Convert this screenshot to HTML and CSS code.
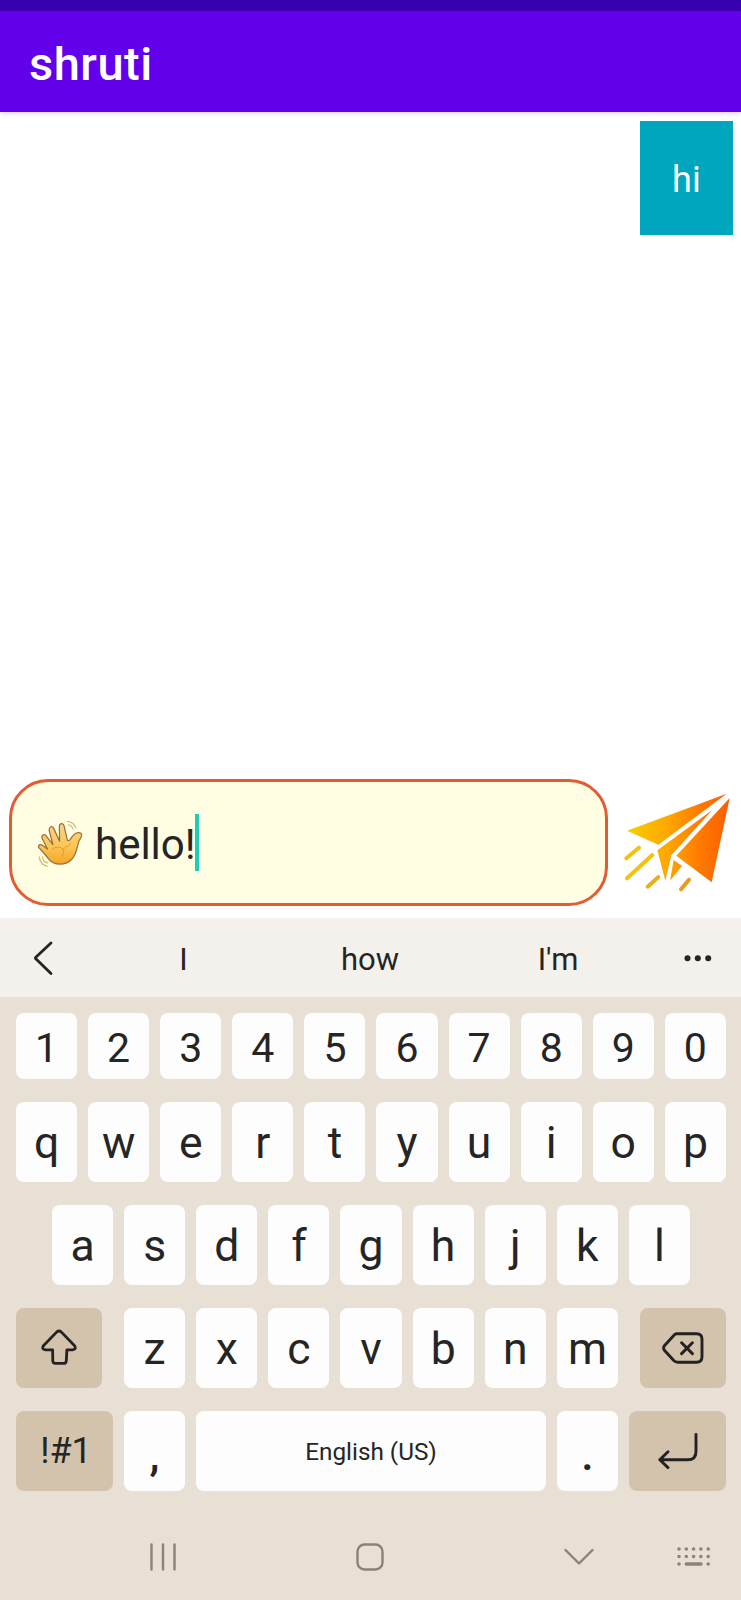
FILE: index.html
```html
<!DOCTYPE html>
<html lang="en">
<head>
<meta charset="utf-8">
<title>shruti</title>
<link rel="stylesheet" href="styles.css">
</head>
<body>
<div class="phone">
  <div class="status-bar"></div>
  <header class="app-bar">shruti</header>
  <main class="messages"><div class="bubble">hi</div></main>

  <div class="composer">
    <div class="field">
      <svg class="wave" viewBox="110 150 145 145" role="img" aria-label="Waving hand">
        <defs>
          <linearGradient id="skin" x1="0" y1="0" x2="0" y2="1">
            <stop offset="0" stop-color="#f8d488"/><stop offset=".55" stop-color="#fac758"/><stop offset="1" stop-color="#f2a526"/>
          </linearGradient>
        </defs>
        <path d="M147 268C138 255 126 243 118 234C115 227 123 223 129 228L144 239L128 207C125 198 134 193 140 200L160 226L149 184C148 174 157 169 162 177L180 216L179 173C179 162 190 160 193 170L203 213C207 216 211 212 214 206L221 198C228 188 246 188 245 198C245 205 239 210 236 218C231 239 228 257 216 269C198 288 163 289 147 268Z" fill="url(#skin)" stroke="#9b6c3c" stroke-width="3.6" stroke-linejoin="round"/>
        <path d="M157 239C170 230 184 233 190 239C193 247 189 254 188 261M191 239C201 228 208 230 214 222" fill="none" stroke="#dd932c" stroke-width="2.5" stroke-linecap="round"/>
        <path d="M203 157C215 158 224 166 228 177M205 167C212 168 217 173 220 180M120 262C121 276 130 287 144 290M129 262C130 271 136 278 144 280" fill="none" stroke="#d3b76f" stroke-width="3.4" stroke-linecap="round"/>
      </svg>
      <span class="draft">hello!</span><span class="caret"></span>
    </div>
    <svg class="send" viewBox="126 60 330 315" role="img" aria-label="Send">
      <defs>
        <linearGradient id="flame" gradientUnits="userSpaceOnUse" x1="140" y1="0" x2="450" y2="0">
          <stop offset="0" stop-color="#f5d000"/><stop offset=".38" stop-color="#ffa800"/><stop offset=".72" stop-color="#ff7900"/><stop offset="1" stop-color="#fa5d00"/>
        </linearGradient>
      </defs>
      <g fill="url(#flame)">
        <path d="M141 182L440 71L235 224Z"/>
        <path d="M232 241L397 120L274 256L256 332Z"/>
        <path d="M449 84L395 337L289 257Z"/>
        <path d="M281 270L306 288L270 332Z"/>
      </g>
      <g fill="none" stroke-width="12" stroke-linecap="round">
        <path stroke="#f2c20c" d="M139 265L177 233"/>
        <path stroke="#f2c20c" d="M141 325L217 255"/>
        <path stroke="#eab019" d="M203 350L235 321"/>
        <path stroke="#eb9a20" d="M303 358L327 329"/>
      </g>
    </svg>
  </div>

  <div class="suggestions">
    <svg width="20" height="36" viewBox="0 0 20 36"><path d="M18 3L2.8 17.2Q2 18 2.8 18.8L18 33.5" fill="none" stroke="#252525" stroke-width="2.8" stroke-linecap="round"/></svg>
    <span>I</span><span>how</span><span>I'm</span>
    <svg width="30" height="8" viewBox="0 0 30 8" fill="#252525"><circle cx="3.5" cy="4.3" r="3"/><circle cx="13.8" cy="4.3" r="3"/><circle cx="24.2" cy="4.3" r="3"/></svg>
  </div>

  <div class="keyboard">
    <div class="row digits">
      <div class="key">1</div><div class="key">2</div><div class="key">3</div><div class="key">4</div><div class="key">5</div><div class="key">6</div><div class="key">7</div><div class="key">8</div><div class="key">9</div><div class="key">0</div>
    </div>
    <div class="row">
      <div class="key">q</div><div class="key">w</div><div class="key">e</div><div class="key">r</div><div class="key">t</div><div class="key">y</div><div class="key">u</div><div class="key">i</div><div class="key">o</div><div class="key">p</div>
    </div>
    <div class="row home-row">
      <div class="key">a</div><div class="key">s</div><div class="key">d</div><div class="key">f</div><div class="key">g</div><div class="key">h</div><div class="key">j</div><div class="key">k</div><div class="key">l</div>
    </div>
    <div class="row">
      <div class="key accent shift">
        <svg width="36" height="38" viewBox="0 0 36 38"><path d="M15.6 3.1Q18 1 20.4 3.1L33.6 16.8Q35.6 20.4 31.5 20.8L25.9 20.8L25.3 31.8Q25.1 34.4 22.4 34.4L14.4 34.4Q11.9 34.4 11.8 31.8L11.6 20.8L4.5 20.8Q.4 20.4 2.4 16.8Z" fill="none" stroke="#222" stroke-width="2.8" stroke-linejoin="round"/></svg>
      </div>
      <div class="key">z</div><div class="key">x</div><div class="key">c</div><div class="key">v</div><div class="key">b</div><div class="key">n</div><div class="key">m</div>
      <div class="key accent delete">
        <svg width="42" height="32" viewBox="0 0 42 32"><path d="M14.5 1.8H34.5Q40 1.8 40 7.3V24.7Q40 30.2 34.5 30.2H15.5Q13.5 30.2 12 28.8L2.6 18.6Q.6 16 2.6 13.4L12 3.2Q13 1.8 15 1.8ZM19.6 10.8L30.4 21.6M30.4 10.8L19.6 21.6" fill="none" stroke="#222" stroke-width="2.9" stroke-linecap="round" stroke-linejoin="round"/></svg>
      </div>
    </div>
    <div class="row">
      <div class="key accent wide symbols">!#1</div>
      <div class="key mark comma">,</div>
      <div class="key space">English (US)</div>
      <div class="key mark">.</div>
      <div class="key accent wide">
        <svg width="40" height="36" viewBox="0 0 40 36"><path d="M38 1.5V18.5Q38 26.8 29.7 26.8H1.8M10 18.8L1.8 26.8L10 34.6" fill="none" stroke="#222" stroke-width="2.9" stroke-linecap="round" stroke-linejoin="round"/></svg>
      </div>
    </div>
  </div>

  <nav class="nav-bar">
    <svg width="28" height="28" viewBox="0 0 28 28"><path d="M2.5 1.5V26.5M14 1.5V26.5M25.5 1.5V26.5"/></svg>
    <svg width="28" height="28" viewBox="0 0 28 28"><rect x="1.5" y="1.5" width="25" height="25" rx="7"/></svg>
    <svg width="30" height="18" viewBox="0 0 30 18"><path d="M1.5 2L15 15.5L28.5 2"/></svg>
    <svg class="dots" width="34" height="20" viewBox="0 0 34 20"><path d="M2 2h.01M9.3 2h.01M16.6 2h.01M23.9 2h.01M31.2 2h.01M2 9.5h.01M9.3 9.5h.01M16.6 9.5h.01M23.9 9.5h.01M31.2 9.5h.01M2 17h.01M9.3 17H23.9M31.2 17h.01"/></svg>
  </nav>
</div>
</body>
</html>
```

FILE: styles.css
```css
* { box-sizing: border-box; }
body { margin: 0; background: #fff; font-family: Roboto, sans-serif; color: #252525; }
svg { display: block; flex: none; }
.phone { width: 741px; height: 1600px; display: flex; flex-direction: column; overflow: hidden; }

.status-bar { height: 11px; background: #3700b0; }
.app-bar {
  height: 101px; padding: 3px 0 0 29px; display: flex; align-items: center;
  background: #6200ec; color: #fff; font-size: 47px; font-weight: 500; letter-spacing: .5px;
  box-shadow: 0 1px 5px rgba(90, 30, 160, .25);
}
.messages { height: 667px; padding: 9px 8px; display: flex; justify-content: flex-end; align-items: flex-start; }
.bubble {
  width: 93px; height: 114px; padding-top: 4px; display: flex; align-items: center; justify-content: center;
  background: #00a6bd; color: #fff; font-size: 36px; letter-spacing: .3px;
}

.composer { height: 139px; padding-left: 9px; display: flex; align-items: flex-start; }
.field {
  width: 599px; height: 127px; padding-left: 24px; display: flex; align-items: center;
  background: #fffee2; border: 3px solid #e35c31; border-radius: 39px;
}
.wave { width: 49px; height: 49px; margin-top: 1px; }
.draft { margin-left: 10px; padding-top: 4px; font-size: 42px; }
.caret { width: 4px; height: 57px; margin-left: -1px; background: #20ccb4; }
.send { width: 110px; height: 105px; margin: 11px 0 0 14px; }

.suggestions {
  height: 79px; display: grid; grid-template-columns: 86px 195px 178px 198px 84px;
  align-items: center; justify-items: center; background: #f4f0eb; font-size: 31px;
}
.suggestions span { padding-top: 3px; }

.keyboard { height: 519px; padding: 16px 15px 0 16px; display: flex; flex-direction: column; gap: 23px; background: #e9e0d5; }
.row { height: 80px; display: flex; gap: 11px; }
.digits { height: 66px; }
.home-row { padding: 0 36px; }
.key {
  flex: 1 1 0; min-width: 0; padding-top: 1px; display: flex; align-items: center; justify-content: center;
  background: #fdfdfd; border-radius: 8px; font-size: 44.5px;
}
.digits .key { padding-top: 4px; font-size: 41px; }
.accent { background: #d4c3ac; }
.shift, .delete { flex: 0 0 86px; padding-top: 0; }
.shift { margin-right: 11px; }
.delete { margin-left: 11px; }
.wide { flex: 0 0 97px; padding-top: 0; }
.symbols { padding-left: 3px; font-size: 36px; }
.mark { flex: 0 0 61px; padding-top: 7px; font-weight: 500; }
.space { font-size: 24.3px; }

.nav-bar {
  height: 84px; padding: 0 0 2px 96px; display: grid; grid-template-columns: 134px 280px 137px 94px;
  align-items: center; justify-items: center; background: #e9e0d5;
}
.nav-bar svg { fill: none; stroke: #8b827a; stroke-width: 2.4; stroke-linecap: round; stroke-linejoin: round; }
.nav-bar .dots { stroke-width: 3.6; }
```
